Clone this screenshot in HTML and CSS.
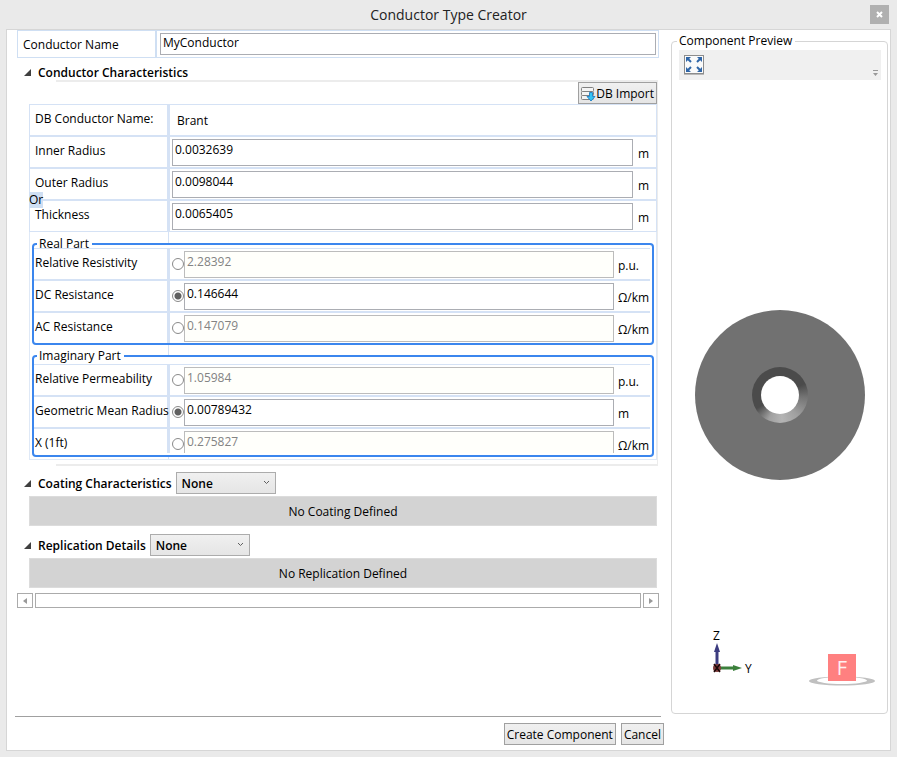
FILE: index.html
```html
<!DOCTYPE html>
<html lang="en">
<head>
    <meta charset="UTF-8">
    <meta name="viewport" content="width=device-width, initial-scale=1.0">
    <title>Conductor Type Creator</title>

    <link rel="stylesheet" href="styles.css">
</head>
<body>

    <header class="titlebar">
        <h1>Conductor Type Creator</h1>
        <button class="close-button" type="button" aria-label="Close">
            <svg width="7" height="7" viewBox="0 0 7 7"><path d="M1 1L6 6M6 1L1 6" stroke="#fff" stroke-width="2"/></svg>
        </button>
    </header>

    <main class="window">
        <form class="editor">
            <div class="name-row">
                <label for="conductor-name">Conductor Name</label>
                <div class="name-field">
                    <input type="text" id="conductor-name" value="MyConductor">
                </div>
            </div>

            <section>
                <div class="section-header plain">
                    <button class="toggle" type="button"><span class="arrow"></span>Conductor Characteristics</button>
                </div>
                <div class="section-body">
                    <div class="import-row">
                        <button class="btn" type="button">
                            <svg width="15" height="16" viewBox="0 0 15 16">
                                <g fill="#f4f4f4" stroke="#808080">
                                    <rect x="0.500" y="1.500" width="12" height="4" rx="1"/>
                                    <rect x="0.500" y="5.500" width="12" height="4" rx="1"/>
                                    <rect x="0.500" y="9.500" width="12" height="4" rx="1"/>
                                </g>
                                <path d="M8.500 6.500h3v4h2.500l-4 4.500-4-4.500h2.500z" fill="#35c5f5" stroke="#2a86c8"/>
                            </svg>DB Import
                        </button>
                    </div>

                    <div class="grid main-grid">
                        <div class="row">
                            <span class="label">DB Conductor Name:</span>
                            <span class="cell value">Brant</span>
                        </div>
                        <div class="row">
                            <label class="label" for="inner-radius">Inner Radius</label>
                            <div class="cell"><input type="text" id="inner-radius" value="0.0032639"><span class="unit">m</span></div>
                        </div>
                        <div class="row">
                            <label class="label" for="outer-radius">Outer Radius</label>
                            <div class="cell"><input type="text" id="outer-radius" value="0.0098044"><span class="unit">m</span></div>
                        </div>
                        <div class="row">
                            <span class="or">Or</span>
                            <label class="label" for="thickness">Thickness</label>
                            <div class="cell"><input type="text" id="thickness" value="0.0065405"><span class="unit">m</span></div>
                        </div>
                    </div>

                    <div class="parts">
                        <fieldset class="part">
                            <legend>Real Part</legend>
                            <div class="grid">
                                <div class="row">
                                    <label class="label" for="resistivity">Relative Resistivity</label>
                                    <div class="cell"><input type="radio" name="real" aria-label="Use relative resistivity"><input type="text" id="resistivity" value="2.28392" disabled><span class="unit">p.u.</span></div>
                                </div>
                                <div class="row">
                                    <label class="label" for="dc-resistance">DC Resistance</label>
                                    <div class="cell"><input type="radio" name="real" aria-label="Use DC resistance" checked><input type="text" id="dc-resistance" value="0.146644"><span class="unit">Ω/km</span></div>
                                </div>
                                <div class="row">
                                    <label class="label" for="ac-resistance">AC Resistance</label>
                                    <div class="cell"><input type="radio" name="real" aria-label="Use AC resistance"><input type="text" id="ac-resistance" value="0.147079" disabled><span class="unit">Ω/km</span></div>
                                </div>
                            </div>
                        </fieldset>

                        <fieldset class="part imaginary">
                            <legend>Imaginary Part</legend>
                            <div class="grid">
                                <div class="row">
                                    <label class="label" for="permeability">Relative Permeability</label>
                                    <div class="cell"><input type="radio" name="imaginary" aria-label="Use relative permeability"><input type="text" id="permeability" value="1.05984" disabled><span class="unit">p.u.</span></div>
                                </div>
                                <div class="row">
                                    <label class="label" for="gmr">Geometric Mean Radius</label>
                                    <div class="cell"><input type="radio" name="imaginary" aria-label="Use geometric mean radius" checked><input type="text" id="gmr" value="0.00789432"><span class="unit">m</span></div>
                                </div>
                                <div class="row">
                                    <label class="label" for="x-1ft">X (1ft)</label>
                                    <div class="cell"><input type="radio" name="imaginary" aria-label="Use X (1ft)"><input type="text" id="x-1ft" value="0.275827" disabled><span class="unit">Ω/km</span></div>
                                </div>
                            </div>
                        </fieldset>
                    </div>
                </div>
            </section>

            <section>
                <div class="section-header">
                    <button class="toggle" type="button"><span class="arrow"></span>Coating Characteristics</button>
                    <div class="select-box">
                        <select aria-label="Coating Characteristics"><option>None</option></select>
                        <svg width="7" height="5" viewBox="0 0 7 5"><path d="M1 1l2.500 2.500L6 1" fill="none" stroke="#606060"/></svg>
                    </div>
                </div>
                <div class="empty">No Coating Defined</div>
            </section>

            <section>
                <div class="section-header">
                    <button class="toggle" type="button"><span class="arrow"></span>Replication Details</button>
                    <div class="select-box">
                        <select aria-label="Replication Details"><option>None</option></select>
                        <svg width="7" height="5" viewBox="0 0 7 5"><path d="M1 1l2.500 2.500L6 1" fill="none" stroke="#606060"/></svg>
                    </div>
                </div>
                <div class="empty">No Replication Defined</div>
            </section>

            <div class="scrollbar">
                <button type="button" aria-label="Scroll left"><svg width="4" height="6" viewBox="0 0 4 6"><path d="M4 0v6L0 3z" fill="#999"/></svg></button>
                <div class="thumb"></div>
                <button type="button" aria-label="Scroll right"><svg width="4" height="6" viewBox="0 0 4 6"><path d="M0 0v6l4-3z" fill="#999"/></svg></button>
            </div>

            <div class="actions">
                <button class="btn" type="submit">Create Component</button>
                <button class="btn" type="button">Cancel</button>
            </div>
        </form>

        <fieldset class="preview">
            <legend>Component Preview</legend>
            <div class="preview-inner">
                <div class="toolbar">
                    <button class="fit-button" type="button" aria-label="Zoom to fit">
                        <svg width="22" height="22" viewBox="0 0 22 22">
                            <rect x="1.500" y="1.500" width="19" height="18" fill="#fafafa" stroke="#8c8c8c"/>
                            <path d="M1 20.500h20" stroke="#b8b8b8"/>
                            <path d="M3 3h5L3 8zM19 3v5L14 3zM3 18v-5L8 18zM19 18h-5L19 13z" fill="#2f66a8"/>
                            <path d="M5 5l3 3M17 5l-3 3M5 16l3-3M17 16l-3-3" stroke="#2f66a8" stroke-width="2"/>
                        </svg>
                    </button>
                    <svg class="overflow" width="5" height="6" viewBox="0 0 5 6"><path d="M0 0h5v1H0zM0 3h5L2.500 6z" fill="#999"/></svg>
                </div>
                <div class="canvas">
                    <div class="conductor"><div class="bevel"><div class="hole"></div></div></div>
                    <svg class="axes" width="48" height="54" viewBox="0 -8 48 54">
                        <path d="M7 37V19" stroke="#3c3c80" stroke-width="3"/>
                        <path d="M7 12l3 9H4z" fill="#3c3c80"/>
                        <path d="M9 37h15" stroke="#3c803c" stroke-width="3"/>
                        <path d="M32 37l-9-3v6z" fill="#3c803c"/>
                        <circle cx="7" cy="37" r="4" fill="#803c3c"/>
                        <path d="M4 33l6 8M10 33l-6 8" stroke="#1a0808" stroke-width="1.500"/>
                        <text x="3" y="9">Z</text>
                        <text x="35" y="42">Y</text>
                    </svg>
                    <svg class="cube" width="66" height="34" viewBox="0 0 66 34">
                        <path fill-rule="evenodd" d="M0 28a33 4.500 0 1 0 66 0a33 4.500 0 1 0 -66 0zM8 27.500a25 3.500 0 1 0 50 0a25 3.500 0 1 0 -50 0z" fill="#c0c0c0"/>
                        <rect x="19" y="1" width="28" height="27" fill="#ff8080"/>
                        <text x="33" y="22" text-anchor="middle">F</text>
                    </svg>
                </div>
            </div>
        </fieldset>
    </main>

</body>
</html>
```

FILE: styles.css
```css
*, *::before, *::after {
    box-sizing: border-box;
}

body {
    display: flex;
    flex-direction: column;
    min-height: 100vh;
    margin: 0;
    background-color: #eaeaea;
    color: #000;
    font-family: "Open Sans", "Noto Sans", sans-serif;
    font-size: 12px;
    line-height: 16px;
}

button, input, select {
    font: inherit;
    color: inherit;
}

button {
    padding: 0;
    border: none;
    background: none;
}

fieldset {
    min-width: 0;
    margin: 0;
    padding: 0;
}

svg {
    display: block;
}

.titlebar {
    position: relative;
    height: 29px;
    text-align: center;
}

.titlebar h1 {
    margin: 0;
    font-size: 14px;
    font-weight: normal;
    line-height: 30px;
    color: #222;
}

.close-button {
    position: absolute;
    top: 5px;
    right: 8px;
    display: flex;
    align-items: center;
    justify-content: center;
    width: 19px;
    height: 19px;
    background-color: #b0b0b0;
}

.window {
    flex: 1;
    display: flex;
    gap: 10px;
    margin: 0 6px 6px;
    padding: 0 2px 0 8px;
    border: 1px solid #d6d6d6;
    background-color: #fff;
}

.editor {
    flex: 1;
    display: flex;
    flex-direction: column;
    min-width: 0;
}

/* conductor name */
.name-row {
    display: flex;
    height: 28px;
    margin: 0 2px;
    border: 1px solid #cfdff3;
}

.name-row label {
    width: 139px;
    padding: 6px 5px;
    border-right: 2px solid #cfdff3;
}

.name-field {
    flex: 1;
    display: flex;
    padding: 2px 2px 2px 3px;
}

input[type="text"] {
    flex: 1;
    min-width: 0;
    height: 22px;
    margin: 0;
    padding: 0 2px 3px;
    border: 1px solid #abadb3;
    border-radius: 0;
    background-color: #fff;
}

/* collapsible sections */
.section-header {
    display: flex;
    align-items: center;
    gap: 4px;
    padding: 6px 0 2px 9px;
}

.section-header.plain {
    height: 22px;
    padding-bottom: 0;
}

.toggle {
    display: flex;
    align-items: center;
    gap: 7px;
    padding-top: 1px;
    font-weight: 600;
    white-space: nowrap;
}

.arrow {
    width: 7px;
    height: 7px;
    background-color: #404040;
    clip-path: polygon(100% 0, 100% 100%, 0 100%);
}

.section-body {
    margin: 0 3px 0 14px;
    padding: 2px 0 6px;
    border-right: 1px solid #ececec;
    background: linear-gradient(#ececec, #ececec) right top / calc(100% - 27px) 2px no-repeat,
                linear-gradient(#ececec, #ececec) right bottom / calc(100% - 27px) 2px no-repeat;
}

.import-row {
    display: flex;
    justify-content: flex-end;
}

.btn {
    display: flex;
    align-items: center;
    justify-content: center;
    height: 22px;
    padding: 1px 2px 0;
    border: 1px solid #a0a0a0;
    background: linear-gradient(#f0f0f0, #e5e5e5);
    white-space: nowrap;
}

/* property grid */
.row {
    position: relative;
    display: flex;
    height: 32px;
    border-bottom: 2px solid #d5e2f5;
}

.grid {
    border-top: 1px solid #d5e2f5;
}

.main-grid {
    border: 1px solid #d5e2f5;
}

.row:last-child {
    height: 30px;
    border-bottom: none;
}

.label {
    width: 140px;
    padding: 6px 0 8px 5px;
    border-right: 3px solid #d5e2f5;
    white-space: nowrap;
}

.cell {
    flex: 1;
    display: flex;
    min-width: 0;
    padding: 2px 0 1px 2px;
}

.cell.value {
    padding: 8px 7px;
}

.cell input[type="text"] {
    height: 27px;
    padding-bottom: 6px;
}

.cell input:disabled {
    border-color: #bcbcbc;
    background-color: #fffffb;
    color: #838383;
}

.unit {
    width: 23px;
    padding: 7px 0 0 5px;
}

.or {
    position: absolute;
    top: -9px;
    left: -1px;
    z-index: 1;
    background-color: #cfdff3;
}

.parts {
    display: flex;
    flex-direction: column;
    gap: 7px;
    padding: 8px 2px 2px;
    border: 1px solid #dfe9f7;
    border-top: none;
    background: linear-gradient(#d5e2f5, #d5e2f5) 138px 0 / 1px 100% no-repeat;
}

.part {
    border: 2px solid #3b86ee;
    border-radius: 4px;
    background-color: #fff;
}

.part legend {
    height: 8px;
    margin-left: 3px;
    padding: 0 3px 0 2px;
    line-height: 8px;
}

.part .grid {
    margin-right: 2px;
}

.part .label {
    width: 136px;
    padding-left: 1px;
}

.part .unit {
    width: 36px;
    padding-left: 4px;
}

.imaginary {
    padding: 4px 0 2px;
}

/* the last row is cut off by the frame */
.imaginary .row:last-child {
    height: 24px;
    overflow: hidden;
}

input[type="radio"] {
    appearance: none;
    width: 12px;
    height: 12px;
    margin: 7px 0 0;
    border: 1px solid #8a8a8a;
    border-radius: 50%;
    background-color: #fff;
}

input[type="radio"]:checked {
    background: radial-gradient(circle, #606060 3px, #fff 4px);
}

.select-box {
    position: relative;
}

.select-box select {
    display: block;
    appearance: none;
    width: 100px;
    height: 22px;
    padding: 1px 5px 0;
    border: 1px solid #acacac;
    border-radius: 0;
    background: linear-gradient(#f0f0f0, #e5e5e5);
    font-weight: 600;
}

.select-box svg {
    position: absolute;
    top: 8px;
    right: 6px;
    pointer-events: none;
}

.empty {
    height: 30px;
    margin: 0 4px 2px 14px;
    padding: 7px;
    border: 1px solid #dcdcdc;
    background-color: #d3d3d3;
    text-align: center;
}

.scrollbar {
    display: flex;
    gap: 2px;
    height: 15px;
    margin: 3px 2px 0;
}

.scrollbar button, .thumb {
    display: flex;
    align-items: center;
    justify-content: center;
    width: 16px;
    border: 1px solid #ababab;
}

.thumb {
    flex: 1;
}

.actions {
    display: flex;
    justify-content: flex-end;
    gap: 5px;
    margin: auto 0 5px;
    padding-top: 6px;
    border-top: 1px solid #a0a0a0;
}

.actions .btn:last-child {
    margin-right: -3px;
}

/* preview */
.preview {
    display: flex;
    width: 217px;
    margin: 3px 0 36px;
    border: 1px solid #d5d5d5;
    border-radius: 4px;
}

.preview legend {
    height: 16px;
    margin-left: 5px;
    padding: 0 3px 0 2px;
    white-space: nowrap;
}

.preview-inner {
    flex: 1;
    display: flex;
    flex-direction: column;
    padding-top: 1px;
}

.toolbar {
    display: flex;
    align-items: flex-end;
    justify-content: space-between;
    height: 30px;
    margin: 0 6px 0 7px;
    padding: 4px 3px 4px 4px;
    background-color: #f0f0f0;
}

.canvas {
    position: relative;
    flex: 1;
    display: grid;
    place-items: center;
    padding-bottom: 4px;
}

.conductor, .bevel, .hole {
    display: grid;
    place-items: center;
    border-radius: 50%;
}

.conductor {
    width: 170px;
    height: 170px;
    background-color: #717171;
}

.bevel {
    width: 56px;
    height: 56px;
    background: conic-gradient(#4b4b4b 0deg 65deg, #747474 95deg, #a0a0a0 140deg, #b4b4b4 175deg, #a0a0a0 205deg, #4b4b4b 240deg 360deg);
}

.hole {
    width: 38px;
    height: 38px;
    background-color: #fff;
}

.axes {
    position: absolute;
    bottom: 36px;
    left: 38px;
    font-size: 12px;
}

.cube {
    position: absolute;
    right: 12px;
    bottom: 26px;
    font-size: 20px;
    fill: #fff0f0;
}
```
